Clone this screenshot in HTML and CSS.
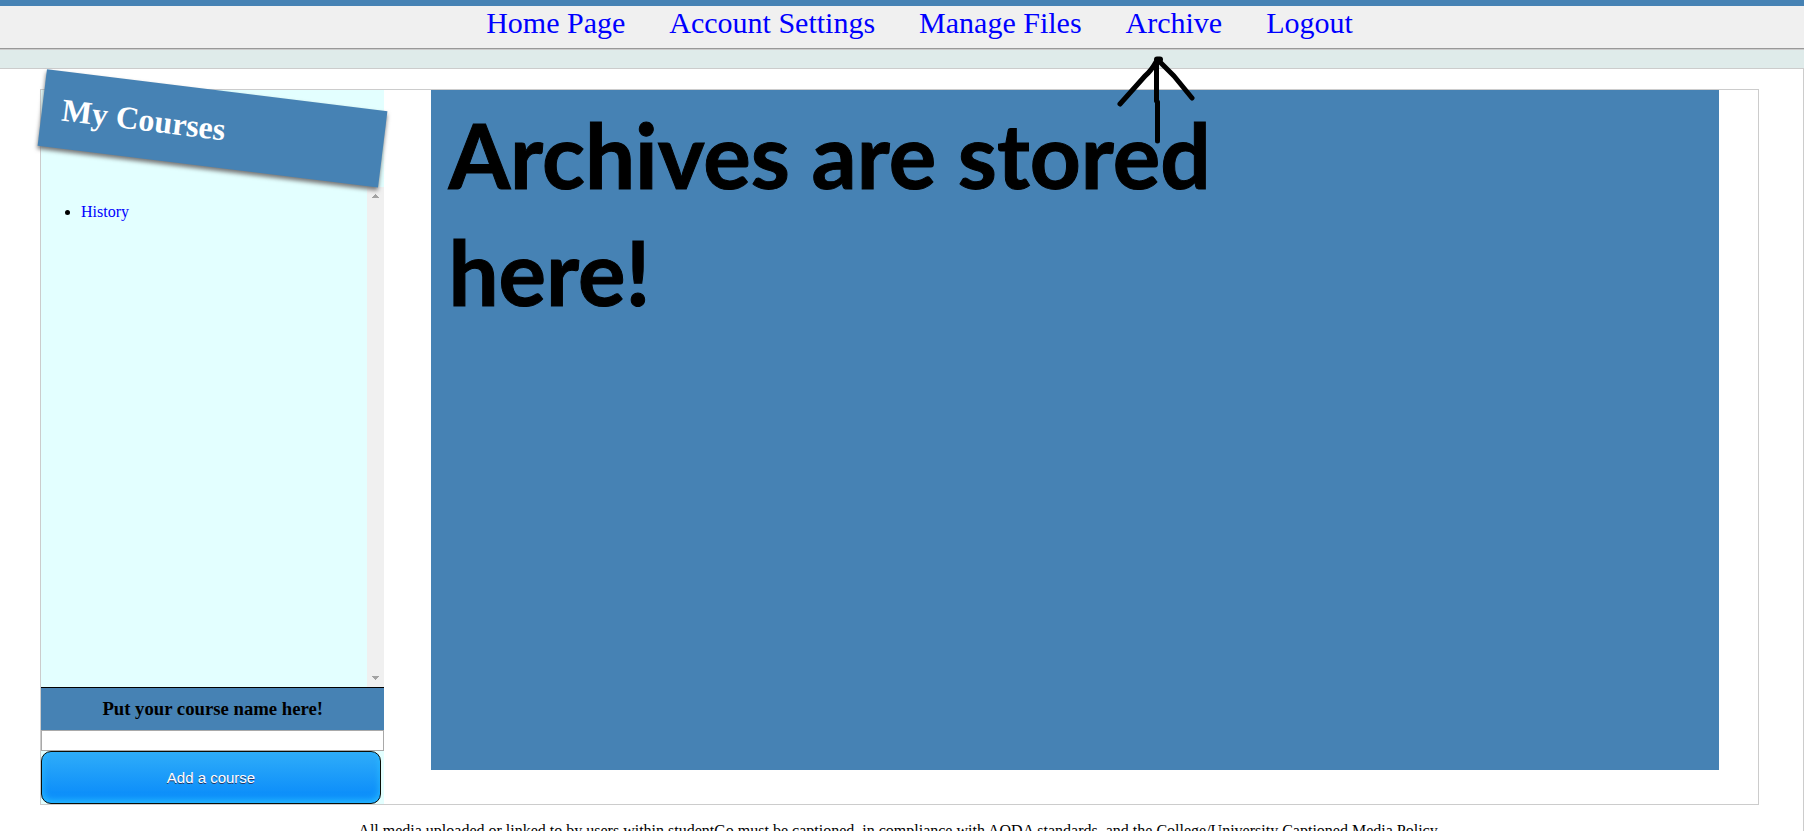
FILE: index.html
```html
<!DOCTYPE html>
<html lang="en">
<head>
<meta charset="utf-8">
<title>Archive</title>
<link rel="stylesheet" href="styles.css">
</head>
<body>
<nav class="topnav">
  <ul class="menu">
    <li><a href="#home">Home Page</a></li>
    <li><a href="#account">Account Settings</a></li>
    <li><a href="#files">Manage Files</a></li>
    <li class="pointed"><a href="#archive">Archive</a>
      <svg class="arrow" viewBox="0 0 78 88" width="78" height="88" aria-hidden="true">
        <path d="M39.500 5V45L40.500 46V85M39 6Q34 15 28 20L3 48M42 5L57 20L75 42"/>
        <path class="tip" d="M40 3.500H43"/>
      </svg>
    </li>
    <li><a href="#logout">Logout</a></li>
  </ul>
</nav>
<div class="band"></div>
<div class="page">
  <div class="panel">
    <aside class="sidebar">
      <h1 class="banner">My Courses</h1>
      <div class="courses">
        <ul class="course-list">
          <li><a href="#history">History</a></li>
        </ul>
        <div class="scrollbar" aria-hidden="true">
          <svg viewBox="0 0 7 4" width="7" height="4"><path d="M3 0h1v1h1v1h1v1h1v1H0V3h1V2h1V1h1z"/></svg>
          <svg viewBox="0 0 7 4" width="7" height="4"><path d="M0 0h7v1H6v1H5v1H4v1H3V3H2V2H1V1H0z"/></svg>
        </div>
      </div>
      <form class="add-form">
        <h3 class="prompt"><label for="course">Put your course name here!</label></h3>
        <input class="field" id="course" type="text">
        <button class="add" type="button">Add a course</button>
      </form>
    </aside>
    <main class="archive">
      <p class="notice">Archives are stored here!</p>
    </main>
  </div>
  <footer class="footer">All media uploaded or linked to by users within studentGo must be captioned, in compliance with AODA standards, and the College/University Captioned Media Policy.</footer>
</div>
</body>
</html>
```
FILE: styles.css
```css
* {
  box-sizing: border-box;
}

body {
  margin: 0;
  background: #fff;
  color: #000;
  font-family: "Liberation Serif", "Times New Roman", serif;
  font-size: 16px;
}

a {
  color: #00f;
  text-decoration: none;
}

.topnav {
  border-top: 6px solid #4682b4;
  border-bottom: 1px solid #999;
  background: #f0f0f0;
}

.menu {
  display: flex;
  justify-content: center;
  gap: 44px;
  height: 42px;
  margin: 0;
  padding: 0 0 0 35px;
  list-style: none;
  font-size: 30px;
  line-height: 34px;
}

.pointed {
  position: relative;
}

.arrow {
  position: absolute;
  top: 50px;
  left: -9px;
  z-index: 2;
  fill: none;
  stroke: #000;
  stroke-width: 5;
  stroke-linecap: round;
  stroke-linejoin: round;
}

.tip {
  stroke-width: 6;
}

.band {
  height: 20px;
  border-top: 1px solid #ccc;
  border-bottom: 1px solid #ccc;
  background: #dfebea;
}

.page {
  padding: 20px 44px 0 40px;
  border-right: 1px solid #ccc;
}

.panel {
  display: flex;
  align-items: flex-start;
  border: 1px solid #ccc;
}

.sidebar {
  flex: none;
  width: 20%;
  background: #e3ffff;
}

.banner {
  position: relative;
  margin: 0 0 20px;
  padding: 20px;
  background: #4682b4;
  box-shadow: 0 3px 4px #777;
  color: #fff;
  font-size: 32px;
  line-height: 37px;
  transform: rotate(7deg);
}

.courses {
  display: flex;
  height: 500px;
}

.course-list {
  flex: 1;
  margin: 16px 0;
  padding: 0 0 0 40px;
}

.scrollbar {
  display: flex;
  flex-direction: column;
  justify-content: space-between;
  align-items: center;
  width: 17px;
  padding: 7px 0;
  background: #f0f0f0;
  fill: #a3a3a3;
}

.add-form {
  display: flex;
  flex-direction: column;
}

.prompt {
  margin: 0;
  padding: 10px 0;
  border-top: 1px solid #000;
  background: #4682b4;
  line-height: 22px;
  text-align: center;
}

.field {
  width: 100%;
  height: 21px;
  border: 1px solid #a9a9a9;
  background: #fff;
}

.add {
  width: 99%;
  padding: 17px 23px;
  border: 1px solid #0b0e07;
  border-radius: 10px;
  background: linear-gradient(to bottom, #2dabf9 5%, #0688fa 100%);
  box-shadow: inset 0 -3px 7px 0 #29bbff;
  color: #fff;
  font-family: "Liberation Sans", Arial, sans-serif;
  font-size: 15px;
  line-height: 17px;
  text-shadow: 0 1px 0 #263666;
}

.archive {
  width: 75%;
  min-height: 680px;
  margin-left: 47px;
  padding: 6px 17px;
  background: #4682b4;
}

.notice {
  max-width: 960px;
  margin: 0;
  font-family: Lato, Carlito, Calibri, sans-serif;
  font-size: 89px;
  font-weight: 700;
  line-height: 117px;
  -webkit-text-stroke: 1px #000;
}

.footer {
  padding: 17px 0;
  text-align: center;
}
```
